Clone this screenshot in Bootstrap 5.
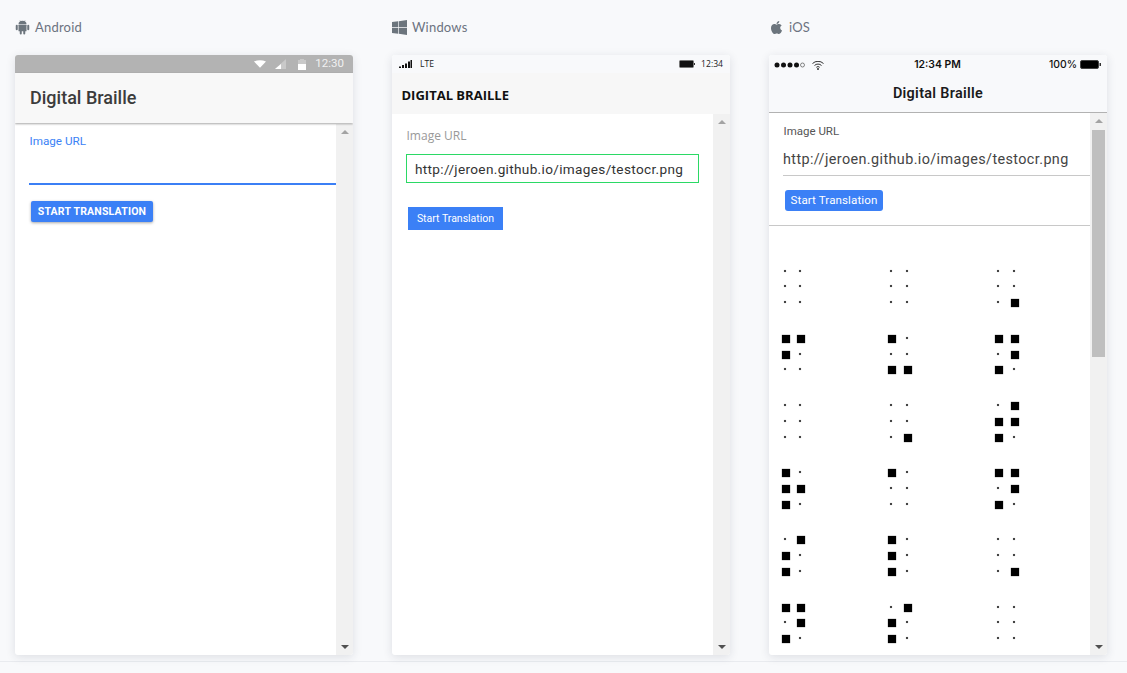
<!DOCTYPE html>
<html lang="en">
<head>
<meta charset="utf-8">
<title>Digital Braille</title>
<link href="https://cdn.jsdelivr.net/npm/bootstrap@5.3.0/dist/css/bootstrap.min.css" rel="stylesheet">
<style>
html,body{height:100%;overflow:hidden}
body{background:#f8f9fb;font-family:Roboto,"Liberation Sans",sans-serif}
.stage{padding:0 15px;height:662px;gap:39px;border-bottom:1px solid #e9ebef}
.device{width:338px}
.os-name{height:55px;gap:5px;color:#6c7380;font:13px/1 Lato,sans-serif;letter-spacing:.2px}
.os-name svg{width:15px;height:15px;fill:#6c757d;flex:none}
.phone{width:338px;height:600px;background:#fff;border-radius:3px;box-shadow:0 2px 10px rgba(40,50,70,.13);overflow:hidden}
.track{width:17px;background:#f1f1f1;flex:none;padding:6px 0}
.up,.down{width:0;height:0;border-left:4px solid transparent;border-right:4px solid transparent;margin:0 auto}
.up{border-bottom:4px solid #a3a3a3}
.down{border-top:4px solid #505050}
.pane{min-width:0}

/* android */
.a-status{height:18px;background:#b3b3b3;color:#f1f1f1;font-size:11.5px;padding-right:9px}
.a-wifi{margin-right:9px}
.a-signal{margin-right:12px}
.a-batt{margin-right:9px}
.a-head{height:50px;background:#f8f8f8;padding:0 0 2px 15px;font-size:18px;font-weight:500;color:#3c3c3c;box-shadow:0 1px 2px rgba(0,0,0,.35);position:relative;margin-bottom:1px}
.a-label{color:#3b82f6;font-size:11.7px;margin:10px 0 0 14.5px;line-height:14px}
.a-input.form-control{margin:13px 0 0 14px;width:307px;height:24px;border:0;border-bottom:2px solid #3b7ff5;border-radius:0;background:transparent;box-shadow:none}
.a-btn.btn{margin:16px 0 0 16px;width:122px;height:21px;padding:0;background:#3b80f6;border:0;border-radius:2px;color:#fff;font-size:10.5px;font-weight:700;letter-spacing:.2px;box-shadow:0 1px 3px rgba(0,0,0,.35)}

/* windows */
.w-status{height:18px;background:#f8f9fb;font-size:8.6px;padding:0 7px;color:#222;font-family:"Open Sans",sans-serif}
.w-head{height:41px;background:#f7f7f7;padding:3px 0 0 9.5px;font:700 13px "Open Sans",sans-serif;color:#111}
.w-label{color:#999;font:12px/14px "Open Sans",sans-serif;margin:15px 0 0 14.5px}
.w-input.form-control{margin:11px 0 0 14px;width:293px;height:29px;border:1px solid #2bd965;border-radius:0;padding:0 8px;font-size:13.6px;letter-spacing:.33px;color:#333;box-shadow:none;font-family:Roboto,sans-serif}
.w-btn.btn{margin:24px 0 0 16px;width:95px;height:23px;padding:0;background:#3b80f6;border:0;border-radius:0;color:#fff;font:10.5px Roboto,sans-serif}
.w-right{gap:6px}

/* ios */
.i-status{height:18px;background:#f8f9fb;font-size:10.4px;font-weight:500;color:#111;padding:2px 6px 0 5px;font-family:Inter,Roboto,sans-serif}
.i-status>div{flex:1 1 0}
.i-head{height:40px;background:#f8f9fb;font:600 14.4px Roboto,sans-serif;letter-spacing:.3px;color:#1b1b1b;border-bottom:1px solid #b2b2b2;padding-top:1px}
.i-label{color:#555;font-size:11.5px;line-height:14px;margin:11px 0 0 14.5px}
.i-input.form-control{margin:6px 0 0 14px;width:calc(100% - 14px);height:32px;border:0;border-bottom:1px solid #c8c8c8;border-radius:0;background:transparent;padding:0;font-size:14.4px;letter-spacing:.39px;color:#444;box-shadow:none}
.i-btn.btn{margin:14px 0 0 16px;width:98px;height:21px;padding:0;background:#3b80f6;border:0;border-radius:3px;color:#fff;font-size:11.6px;letter-spacing:.1px;display:block}
.i-rule{border-top:1px solid #c8c8c8;margin-top:14px;height:0}
.dots{display:grid;grid-template-columns:repeat(3,106.7px);row-gap:19.8px;padding:41.7px 0 0 12.7px}
.glyph{display:grid;grid-template-columns:15.7px 15.7px;grid-auto-rows:15.8px;width:32px}
.pt{display:block;width:2px;height:2px;background:#444;margin:2px 0 0 2px;box-shadow:0 0 1px rgba(0,0,0,.45)}
.pt.on{width:8px;height:8px;background:#000;margin:0;box-shadow:0 0 1px rgba(0,0,0,.75)}
.i-scroll{width:17px;background:#f1f1f1;flex:none;padding:6px 0}
.thumb{width:13px;height:227px;background:#bfbfbf;margin:7px auto 0}
.i-scroll .down{margin-top:auto}
.stat{gap:3px}
</style>
</head>
<body>
<div class="stage d-flex">

  <section class="device">
    <div class="os-name d-flex align-items-center">
      <svg viewBox="0 0 30 30"><rect x="7" y="9.5" width="16" height="13" rx="1"/><path d="M7 8.5a8 7 0 0 1 16 0z"/><rect x="1.5" y="9.5" width="4" height="11" rx="2"/><rect x="24.500" y="9.500" width="4" height="11" rx="2"/><rect x="9.500" y="20" width="4" height="9" rx="2"/><rect x="16.500" y="20" width="4" height="9" rx="2"/><path d="M10 1l2 3M20 1l-2 3" stroke="#6c757d" stroke-width="1.300"/></svg>
      <span>Android</span>
    </div>
    <div class="phone d-flex flex-column">
      <div class="a-status d-flex align-items-center justify-content-end">
        <svg width="12" height="8" viewBox="0 0 14 9" class="a-wifi"><path d="M0 1.500Q7-1.500 14 1.500L7 9z" fill="#fff"/></svg>
        <svg width="11" height="10" viewBox="0 0 11 10" class="a-signal"><path d="M11 0v10H0z" fill="#c9c9c9"/><path d="M6 5v5H0z" fill="#fff"/></svg>
        <svg width="8" height="11" viewBox="0 0 8 11" class="a-batt"><path d="M2 0h4v1h2v10H0V1h2z" fill="#c9c9c9"/><path d="M0 5h8v6H0z" fill="#fff"/></svg>
        <span>12:30</span>
      </div>
      <div class="a-head d-flex align-items-center">Digital Braille</div>
      <div class="d-flex flex-grow-1" style="min-height:0">
        <div class="pane flex-grow-1">
          <label class="a-label d-block" for="u1">Image URL</label>
          <input id="u1" class="a-input form-control" type="text">
          <button class="a-btn btn" type="button">START TRANSLATION</button>
        </div>
        <div class="track d-flex flex-column justify-content-between"><div class="up"></div><div class="down"></div></div>
      </div>
    </div>
  </section>

  <section class="device">
    <div class="os-name d-flex align-items-center">
      <svg viewBox="0 32 448 448"><path d="M0 93.7l183.600-25.300v177.400H0V93.700zm0 324.600l183.600 25.300V268.400H0v149.900zm203.800 28L448 480V268.400H203.800v177.900zm0-380.600v180.100H448V32L203.800 65.700z"/></svg>
      <span>Windows</span>
    </div>
    <div class="phone d-flex flex-column">
      <div class="w-status d-flex align-items-center justify-content-between">
        <div class="d-flex align-items-center gap-2">
          <svg width="13" height="8" viewBox="0 0 13 8"><path d="M0 6.500h2V8H0zM3 5h2v3H3zM6 3.500h2V8H6zM9 1.500h2V8H9zM11.500 0h1.500v8h-1.500z" fill="#111"/></svg>
          <span>LTE</span>
        </div>
        <div class="w-right d-flex align-items-center">
          <svg width="16" height="8" viewBox="0 0 16 8"><rect x=".5" y=".5" width="14" height="7" rx="1" fill="#111" stroke="#777"/><rect x="15" y="3" width="1" height="2" fill="#333"/></svg>
          <span>12:34</span>
        </div>
      </div>
      <div class="w-head d-flex align-items-center">DIGITAL BRAILLE</div>
      <div class="d-flex flex-grow-1" style="min-height:0">
        <div class="pane flex-grow-1">
          <label class="w-label d-block" for="u2">Image URL</label>
          <input id="u2" class="w-input form-control" type="text" value="http://jeroen.github.io/images/testocr.png">
          <button class="w-btn btn" type="button">Start Translation</button>
        </div>
        <div class="track d-flex flex-column justify-content-between"><div class="up"></div><div class="down"></div></div>
      </div>
    </div>
  </section>

  <section class="device">
    <div class="os-name d-flex align-items-center">
      <svg viewBox="0 0 384 512"><path d="M318.700 268.700c-.2-36.700 16.400-64.400 50-84.800-18.800-26.900-47.200-41.700-84.700-44.600-35.500-2.800-74.300 20.700-88.500 20.700-15 0-49.400-19.700-76.400-19.700C63.300 141.200 4 184.800 4 273.500q0 39.300 14.400 81.200c12.800 36.700 59 126.700 107.200 125.200 25.200-.6 43-17.900 75.800-17.900 31.800 0 48.300 17.900 76.400 17.900 48.600-.7 90.400-82.500 102.600-119.300-65.200-30.700-61.700-90-61.700-91.900zm-56.600-164.200c27.300-32.400 24.800-61.900 24-72.500-24.100 1.400-52 16.400-67.900 34.900-17.500 19.800-27.800 44.300-25.600 71.900 26.100 2 49.900-11.400 69.500-34.300z"/></svg>
      <span>iOS</span>
    </div>
    <div class="phone d-flex flex-column">
      <div class="i-status d-flex align-items-center">
        <div class="d-flex align-items-center stat">
          <svg width="31" height="6" viewBox="0 0 31 6"><g fill="#111"><circle cx="3" cy="3" r="2.500"/><circle cx="9.500" cy="3" r="2.500"/><circle cx="16" cy="3" r="2.500"/><circle cx="22.500" cy="3" r="2.500"/></g><circle cx="28.500" cy="3" r="2" fill="none" stroke="#555" stroke-width=".7"/></svg>
          <svg class="ms-1" width="12" height="9" viewBox="0 0 12 9"><path d="M.5 2.500a8 8 0 0 1 11 0M2.500 4.500a5 5 0 0 1 7 0M4.300 6.300a2.500 2.500 0 0 1 3.400 0" fill="none" stroke="#333"/><circle cx="6" cy="8" r="1" fill="#333"/></svg>
        </div>
        <div class="text-center fw-semibold">12:34 PM</div>
        <div class="d-flex align-items-center justify-content-end stat">
          <span>100%</span>
          <svg width="21" height="9" viewBox="0 0 21 9"><rect x=".5" y=".5" width="18" height="8" rx="1.500" fill="#000" stroke="#444"/><rect x="19.500" y="3" width="1.500" height="3" fill="#333"/></svg>
        </div>
      </div>
      <div class="i-head d-flex align-items-center justify-content-center">Digital Braille</div>
      <div class="d-flex flex-grow-1" style="min-height:0">
        <div class="pane flex-grow-1 overflow-hidden">
          <label class="i-label d-block" for="u3">Image URL</label>
          <input id="u3" class="i-input form-control" type="text" value="http://jeroen.github.io/images/testocr.png">
          <button class="i-btn btn" type="button">Start Translation</button>
          <div class="i-rule"></div>
          <div class="dots">
            <div class="glyph"><i class="pt"></i><i class="pt"></i><i class="pt"></i><i class="pt"></i><i class="pt"></i><i class="pt"></i></div>
            <div class="glyph"><i class="pt"></i><i class="pt"></i><i class="pt"></i><i class="pt"></i><i class="pt"></i><i class="pt"></i></div>
            <div class="glyph"><i class="pt"></i><i class="pt"></i><i class="pt"></i><i class="pt"></i><i class="pt"></i><i class="pt on"></i></div>

            <div class="glyph"><i class="pt on"></i><i class="pt on"></i><i class="pt on"></i><i class="pt"></i><i class="pt"></i><i class="pt"></i></div>
            <div class="glyph"><i class="pt on"></i><i class="pt"></i><i class="pt"></i><i class="pt"></i><i class="pt on"></i><i class="pt on"></i></div>
            <div class="glyph"><i class="pt on"></i><i class="pt on"></i><i class="pt"></i><i class="pt on"></i><i class="pt on"></i><i class="pt"></i></div>

            <div class="glyph"><i class="pt"></i><i class="pt"></i><i class="pt"></i><i class="pt"></i><i class="pt"></i><i class="pt"></i></div>
            <div class="glyph"><i class="pt"></i><i class="pt"></i><i class="pt"></i><i class="pt"></i><i class="pt"></i><i class="pt on"></i></div>
            <div class="glyph"><i class="pt"></i><i class="pt on"></i><i class="pt on"></i><i class="pt on"></i><i class="pt on"></i><i class="pt"></i></div>

            <div class="glyph"><i class="pt on"></i><i class="pt"></i><i class="pt on"></i><i class="pt on"></i><i class="pt on"></i><i class="pt"></i></div>
            <div class="glyph"><i class="pt on"></i><i class="pt"></i><i class="pt"></i><i class="pt"></i><i class="pt"></i><i class="pt"></i></div>
            <div class="glyph"><i class="pt on"></i><i class="pt on"></i><i class="pt"></i><i class="pt on"></i><i class="pt on"></i><i class="pt"></i></div>

            <div class="glyph"><i class="pt"></i><i class="pt on"></i><i class="pt on"></i><i class="pt"></i><i class="pt on"></i><i class="pt"></i></div>
            <div class="glyph"><i class="pt on"></i><i class="pt"></i><i class="pt on"></i><i class="pt"></i><i class="pt on"></i><i class="pt"></i></div>
            <div class="glyph"><i class="pt"></i><i class="pt"></i><i class="pt"></i><i class="pt"></i><i class="pt"></i><i class="pt on"></i></div>

            <div class="glyph"><i class="pt on"></i><i class="pt on"></i><i class="pt"></i><i class="pt on"></i><i class="pt on"></i><i class="pt"></i></div>
            <div class="glyph"><i class="pt"></i><i class="pt on"></i><i class="pt on"></i><i class="pt"></i><i class="pt on"></i><i class="pt"></i></div>
            <div class="glyph"><i class="pt"></i><i class="pt"></i><i class="pt"></i><i class="pt"></i><i class="pt"></i><i class="pt"></i></div>
          </div>
        </div>
        <div class="i-scroll d-flex flex-column"><div class="up"></div><div class="thumb"></div><div class="down"></div></div>
      </div>
    </div>
  </section>

</div>
</body>
</html>
